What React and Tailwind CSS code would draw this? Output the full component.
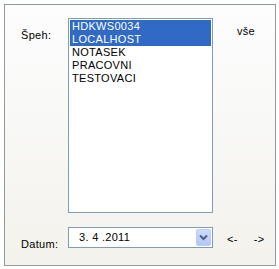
import React from 'react';

const items = ['HDKWS0034', 'LOCALHOST', 'NOTASEK', 'PRACOVNI', 'TESTOVACI'];
const selected = ['HDKWS0034', 'LOCALHOST'];

export default function App() {
  return (
    <div className="w-[279px] h-[269px] bg-white pt-[4px] pl-[4px] text-[11px] leading-[13px] tracking-[0.3px] text-black font-['Liberation_Sans',Arial,sans-serif]">
      {/* Tab page */}
      <div className="w-[272px] h-[262px] border border-[#919b9c] bg-gradient-to-b from-[#fdfdfe] to-[#f3f2ec] pl-[16px] pt-[13px]">
        {/* Špeh row */}
        <div className="flex items-start">
          <div className="w-[47px] mt-[11px]">Špeh:</div>
          <div className="w-[145px] h-[195px] border border-[#7f9db9] bg-white p-[1px]">
            {items.map((item) => (
              <div
                key={item}
                className={
                  selected.includes(item)
                    ? 'h-[13px] pl-[2px] bg-[#316ac5] text-white'
                    : 'h-[13px] pl-[2px]'
                }
              >
                {item}
              </div>
            ))}
          </div>
          <div className="ml-[24px] mt-[7px]">vše</div>
        </div>

        {/* Datum row */}
        <div className="flex items-start mt-[14px]">
          <div className="w-[47px] mt-[11px]">Datum:</div>
          <div className="w-[145px] h-[21px] border border-[#7f9db9] bg-white flex items-center justify-between">
            <span className="pl-[10px]">3. 4 .2011</span>
            <div className="w-[15px] h-[17px] mr-[1px] rounded-[2px] border border-[#b9cdf9] bg-gradient-to-b from-[#cddbfc] to-[#b2c7f5] flex items-center justify-center">
              <svg width="9" height="7" viewBox="0 0 9 7">
                <path d="M1 1.5 L4.5 5 L8 1.5" fill="none" stroke="#4d6185" strokeWidth="2" />
              </svg>
            </div>
          </div>
          <div className="ml-[14px] mt-[6px]">&lt;-</div>
          <div className="ml-[16px] mt-[6px]">-&gt;</div>
        </div>
      </div>
    </div>
  );
}
